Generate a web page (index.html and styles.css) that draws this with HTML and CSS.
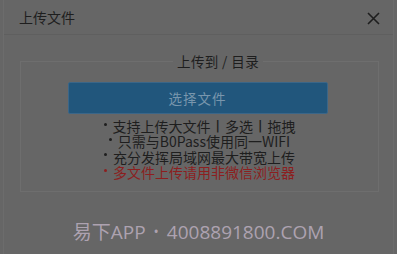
FILE: index.html
```html
<!DOCTYPE html>
<html lang="zh-CN">
<head>
    <meta charset="UTF-8">
    <title>上传文件</title>
    <link rel="stylesheet" href="styles.css">
</head>
<body>
    <div class="dialog">
        <div class="header">
            <span class="title">上传文件</span>
            <span class="close">
                <svg width="13" height="13" viewBox="0 0 13 13"><path d="M1 1L12 12M12 1L1 12" stroke="#1e1e1e" stroke-width="1.6"/></svg>
            </span>
        </div>
        <div class="body">
            <div class="target">上传到 / 目录</div>
            <div class="box">
                <button class="pick">选择文件</button>
                <ul class="tips">
                    <li>支持上传大文件<span class="bar">|</span>多选<span class="bar">|</span>拖拽</li>
                    <li>只需与B0Pass使用同一WIFI</li>
                    <li>充分发挥局域网最大带宽上传</li>
                    <li class="warn">多文件上传请用非微信浏览器</li>
                </ul>
            </div>
        </div>
        <div class="footer">易下APP<span class="dot">•</span>4008891800.COM</div>
    </div>
</body>
</html>
```

FILE: styles.css
```css
body {
    margin: 0;
    background: #666666;
    font-family: "Noto Sans CJK SC", "Noto Sans", sans-serif;
    color: #1e1e1e;
}

.dialog {
    height: 254px;
    border-left: 1px solid #6c6c6c;
    border-right: 1px solid #6c6c6c;
    box-sizing: border-box;
    margin: 0 3px;
    width: 391px;
}

.header {
    display: flex;
    justify-content: space-between;
    align-items: center;
    height: 34px;
    padding: 0 13px 0 14px;
    border-bottom: 1px solid #5f5f5f;
}

.title {
    font-size: 14px;
    padding-left: 1px;
}

.close {
    display: flex;
    padding-top: 2px;
}

.body {
    position: relative;
    padding: 26px 14px 0 16px;
}

.target {
    position: absolute;
    top: 17px;
    left: 169px;
    font-size: 13.5px;
    letter-spacing: 0.4px;
    background: #666666;
    padding: 0 4px;
    line-height: 18px;
}

.box {
    border: 1px solid #6e6e6e;
    height: 131px;
    box-sizing: border-box;
    padding-top: 20px;
    display: flex;
    flex-direction: column;
    align-items: center;
}

.pick {
    width: 260px;
    height: 32px;
    margin-left: -4px;
    background: #21567c;
    border: 1px solid #3b6688;
    border-radius: 2px;
    color: #7996ad;
    font-family: inherit;
    font-size: 13.5px;
    letter-spacing: 1px;
}

.tips {
    list-style: none;
    margin: 5px 0 0;
    padding: 0;
    text-align: center;
    font-size: 14px;
}

.tips li {
    display: flex;
    justify-content: center;
    align-items: center;
    height: 15.3px;
    line-height: 15px;
}

.tips li::before {
    content: "";
    width: 3px;
    height: 3px;
    border-radius: 50%;
    background: currentColor;
    margin: 0 6px 5px 0;
}

.bar {
    font-family: "DejaVu Sans", sans-serif;
    font-weight: bold;
    font-size: 12px;
    margin: 0 5px;
}

.warn {
    color: #8c1f1f;
}

.footer {
    text-align: center;
    margin-top: 25px;
    font-size: 19px;
    color: #ada2b0;
    font-family: "Open Sans", "Noto Sans CJK SC", sans-serif;
}

.dot {
    margin: 0 8px;
    font-size: 14px;
    vertical-align: 2px;
}
```
